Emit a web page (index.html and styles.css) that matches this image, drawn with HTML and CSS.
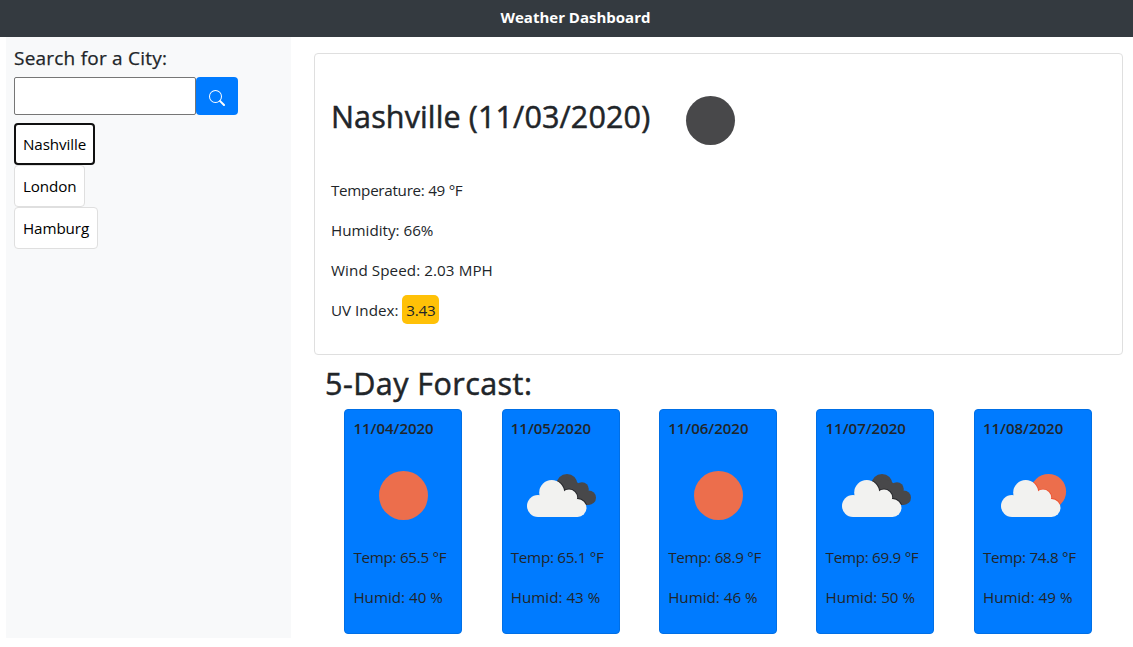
FILE: index.html
```
<!DOCTYPE html>
<html lang="en">
<head>
<meta charset="utf-8">
<title>Weather Dashboard</title>
<link rel="stylesheet" href="styles.css">
</head>
<body>
<svg class="defs" width="0" height="0" aria-hidden="true">
  <defs>
    <g id="cloud">
      <circle cx="27" cy="61" r="11"/><circle cx="40.7" cy="47.5" r="12.5"/><circle cx="58" cy="52.8" r="8.2"/><circle cx="66.5" cy="63" r="9"/><path d="M27 72V55l14-9 17 5 8.500 10v11z"/>
    </g>
    <g id="dark-cloud">
      <circle cx="56" cy="39.500" r="10.500"/><circle cx="71" cy="44" r="6.800"/><circle cx="77.700" cy="52.700" r="7.300"/><path d="M56 32l15 8 6 8v12L60 58 50 45z"/>
    </g>
    <symbol id="broken" viewBox="0 0 100 100">
      <use href="#dark-cloud" fill="#48484a"/>
      <g clip-path="url(#behind)"><use href="#cloud" fill="#222" stroke="#25262a" stroke-width="2"/></g>
      <use href="#cloud" fill="#f2f2f0"/>
    </symbol>
    <symbol id="partly" viewBox="0 0 100 100">
      <circle cx="65.500" cy="46.500" r="17.600" fill="#ec6e4c"/>
      <g clip-path="url(#sunclip)"><use href="#cloud" x="2" fill="#e9512c" stroke="#ed5230" stroke-width="1.800"/></g>
      <use href="#cloud" x="2" fill="#f2f2f0"/>
    </symbol>
    <symbol id="clear" viewBox="0 0 100 100"><circle cx="50.500" cy="50.500" r="24.500"/></symbol>
    <clipPath id="behind"><circle cx="56" cy="39.500" r="10.500"/><circle cx="71" cy="44" r="6.800"/><circle cx="77.700" cy="52.700" r="7.300"/><path d="M56 32l15 8 6 8v12L60 58 50 45z"/></clipPath>
    <clipPath id="sunclip"><circle cx="65.500" cy="46.500" r="17.600"/></clipPath>
  </defs>
</svg>
<header class="topbar"><h1 class="brand">Weather Dashboard</h1></header>
<div class="layout">
  <aside class="sidebar">
    <h2 class="search-title">Search for a City:</h2>
    <form class="search">
      <input class="search-input" type="text" aria-label="City">
      <button class="search-button" type="button" aria-label="Search">
        <svg width="16" height="16" viewBox="0 0 16 16" fill="currentColor"><path fill-rule="evenodd" d="M10.442 10.442a1 1 0 0 1 1.415 0l3.850 3.850a1 1 0 0 1-1.414 1.415l-3.850-3.850a1 1 0 0 1 0-1.415z"/><path fill-rule="evenodd" d="M6.500 12a5.500 5.500 0 1 0 0-11 5.500 5.500 0 0 0 0 11zM13 6.500a6.500 6.500 0 1 1-13 0 6.500 6.500 0 0 1 13 0z"/></svg>
      </button>
    </form>
    <div class="history">
      <button class="city nashville active" type="button">Nashville</button>
      <button class="city london" type="button">London</button>
      <button class="city hamburg" type="button">Hamburg</button>
    </div>
  </aside>
  <main class="content">
    <section class="current">
      <div class="current-head">
        <h2 class="current-title">Nashville (11/03/2020)</h2>
        <svg class="icon night" width="100" height="100"><use href="#clear"/></svg>
      </div>
      <p class="text temp">Temperature: 49 °F</p>
      <p class="text">Humidity: 66%</p>
      <p class="text wind">Wind Speed: 2.03 MPH</p>
      <p class="text">UV Index: <span class="uv">3.43</span></p>
    </section>
    <h2 class="forecast-title">5-Day Forcast:</h2>
    <section class="forecast">
      <article class="day"><h3 class="date">11/04/2020</h3><svg class="icon sun" width="100" height="100"><use href="#clear"/></svg><p class="text temp">Temp: 65.5 °F</p><p class="text">Humid: 40 %</p></article>
      <article class="day"><h3 class="date">11/05/2020</h3><svg class="icon" width="100" height="100"><use href="#broken"/></svg><p class="text temp">Temp: 65.1 °F</p><p class="text">Humid: 43 %</p></article>
      <article class="day"><h3 class="date">11/06/2020</h3><svg class="icon sun" width="100" height="100"><use href="#clear"/></svg><p class="text temp">Temp: 68.9 °F</p><p class="text">Humid: 46 %</p></article>
      <article class="day"><h3 class="date">11/07/2020</h3><svg class="icon" width="100" height="100"><use href="#broken"/></svg><p class="text temp">Temp: 69.9 °F</p><p class="text">Humid: 50 %</p></article>
      <article class="day"><h3 class="date">11/08/2020</h3><svg class="icon" width="100" height="100"><use href="#partly"/></svg><p class="text temp">Temp: 74.8 °F</p><p class="text">Humid: 49 %</p></article>
    </section>
  </main>
</div>
</body>
</html>
```
FILE: styles.css
```
* { box-sizing: border-box; }
body { margin: 0; background: #fff; color: #212529; font-family: "Open Sans", "Noto Sans", sans-serif; font-size: 15.2px; line-height: 24px; overflow: hidden; }
h1, h2, h3, p { margin: 0; white-space: nowrap; }
.defs { display: block; height: 0; }
.topbar { height: 37px; padding: 5px 0 0 18px; background: #343a40; text-align: center; }
.brand { color: #fff; font-size: 15px; line-height: 24px; font-weight: 700; }
.layout { display: flex; padding-left: 6px; }
.sidebar { width: 285px; height: 601px; padding: 9px 8px; background: #f8f9fa; }
.search-title { font-size: 19px; line-height: 24px; font-weight: 500; letter-spacing: 0.22px; -webkit-text-stroke: 0.25px #212529; }
.search { display: flex; margin-top: 7px; }
.search-input { width: 182px; height: 38px; padding: 0 4px; border: 1px solid #767676; border-radius: 2px; background: #fff; }
.search-button { width: 42px; height: 38px; padding: 4px 0 0; border: 0; border-radius: 4px; background: #007bff; color: #fff; display: grid; place-items: center; }
.history { display: flex; flex-direction: column; align-items: flex-start; margin-top: 8px; }
.city { height: 42px; padding: 0 0 0 8px; border: 1px solid #dfdfdf; border-radius: 4px; background: #fff; color: #000; font: inherit; letter-spacing: -0.1px; text-align: left; white-space: nowrap; }
.city.active { border: 2px solid #101010; padding-left: 7px; }
.nashville { width: 81px; }
.london { width: 71px; }
.hamburg { width: 84px; }
.content { width: 809px; margin-left: 23px; padding-top: 16px; }
.current { height: 302px; padding: 16px; border: 1px solid #dfdfdf; border-radius: 4px; }
.current-head { display: flex; gap: 9px; height: 108px; }
.current-title { width: 320px; padding-top: 27px; font-size: 30.500px; line-height: 38px; font-weight: 500; letter-spacing: 0.13px; -webkit-text-stroke: 0.5px #212529; }
.icon { display: block; }
.night { fill: #48484a; }
.sun { fill: #ec6e4c; }
.text { margin-bottom: 16px; }
.temp { letter-spacing: -0.28px; }
.wind { letter-spacing: 0.08px; }
.uv { display: inline-block; width: 37px; margin: -3px 0; height: 29px; padding: 3px 4px 0; border-radius: 5px; background: #ffc107; letter-spacing: -0.2px; }
.forecast-title { margin: 9px 0 7px 11px; font-size: 30.500px; line-height: 38px; font-weight: 500; letter-spacing: 0.45px; -webkit-text-stroke: 0.5px #212529; }
.forecast { display: flex; gap: 39.400px; padding-left: 30.200px; }
.day { width: 118px; height: 225px; flex: none; padding: 8px 0 0 8.200px; border: 1px solid #006fe6; border-radius: 4px; background: #007bff; }
.date { font-size: 15px; line-height: 20px; font-weight: 600; }
.day .icon { margin: 7px 0 0; }
```
